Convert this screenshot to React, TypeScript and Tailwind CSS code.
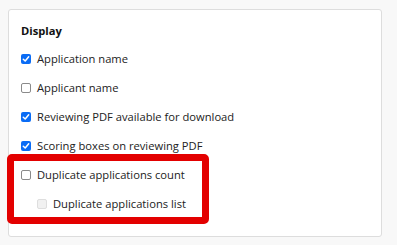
import React from "react";

type State = "checked" | "unchecked" | "disabled";

function Box({ state }: { state: State }) {
  if (state === "checked") {
    return (
      <span className="flex h-[10px] w-[10px] shrink-0 items-center justify-center rounded-[2px] bg-[#0a6cf5]">
        <svg width="8" height="8" viewBox="0 0 8 8" fill="none">
          <path d="M1.3 4.2 L3.2 6 L6.7 1.8" stroke="white" strokeWidth="1.5" strokeLinecap="round" strokeLinejoin="round" />
        </svg>
      </span>
    );
  }
  if (state === "disabled") {
    return <span className="block h-[10px] w-[10px] shrink-0 rounded-[2px] border border-[#dedede] bg-[#f1f1f1]" />;
  }
  return <span className="block h-[10px] w-[10px] shrink-0 rounded-[2px] border border-[#8a8a8a] bg-white" />;
}

function Row({ label, state, indent }: { label: string; state: State; indent?: boolean }) {
  return (
    <div className={`flex h-[29px] items-center ${indent ? "pl-[16px] gap-[6px]" : "gap-[6px]"}`}>
      <Box state={state} />
      <span className="text-[11.2px] leading-none text-[#222]">{label}</span>
    </div>
  );
}

export default function App() {
  return (
    <div
      className="relative h-[245px] w-[397px] bg-[#f8f8f8] pl-[8px] pt-[9px]"
      style={{ fontFamily: '"Open Sans", "Liberation Sans", sans-serif' }}
    >
      <div className="h-[228px] w-[374px] rounded-[3px] border border-[#dddddd] bg-white pl-[12px] pt-[13px]">
        <div className="flex h-[16px] items-center text-[11.2px] font-bold leading-none text-[#111]">Display</div>
        <div className="mt-[5px] flex flex-col">
          <Row label="Application name" state="checked" />
          <Row label="Applicant name" state="unchecked" />
          <Row label="Reviewing PDF available for download" state="checked" />
          <Row label="Scoring boxes on reviewing PDF" state="checked" />
          <Row label="Duplicate applications count" state="unchecked" />
          <Row label="Duplicate applications list" state="disabled" indent />
        </div>
      </div>
      <div className="absolute left-[7px] top-[154px] h-[70px] w-[202px] rounded-[5px] border-[7px] border-[#e30000]" />
    </div>
  );
}
